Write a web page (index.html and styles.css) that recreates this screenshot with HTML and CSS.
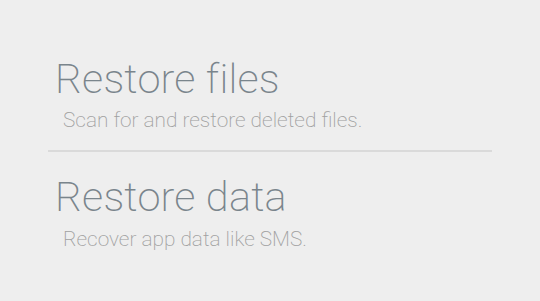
FILE: index.html
```html
<!DOCTYPE html>
<html>
<head>
<meta charset="utf-8">
<link rel="stylesheet" href="styles.css">
</head>
<body>
<div class="list">
  <div class="item">
    <div class="title">Restore files</div>
    <div class="subtitle">Scan for and restore deleted files.</div>
  </div>
  <div class="divider"></div>
  <div class="item">
    <div class="title">Restore data</div>
    <div class="subtitle second">Recover app data like SMS.</div>
  </div>
</div>
</body>
</html>
```
FILE: styles.css
```css
html, body {
  margin: 0;
  padding: 0;
  background: #eeeeee;
  width: 540px;
  height: 301px;
  overflow: hidden;
}
.list {
  padding: 54px 48px 0 48px;
  font-family: Roboto, "Liberation Sans", sans-serif;
  font-weight: 200;
}
.item {
  padding-left: 7px;
}
.title {
  font-size: 41.5px;
  line-height: 50px;
  letter-spacing: 0.2px;
  color: #7a858c;
}
.subtitle {
  font-size: 20.8px;
  line-height: 32px;
  color: #a0a0a0;
  padding-left: 8px;
}
.subtitle.second {
  line-height: 34px;
}
.divider {
  height: 2px;
  background: #dadada;
  margin: 14px 0 20px 0;
}
```
